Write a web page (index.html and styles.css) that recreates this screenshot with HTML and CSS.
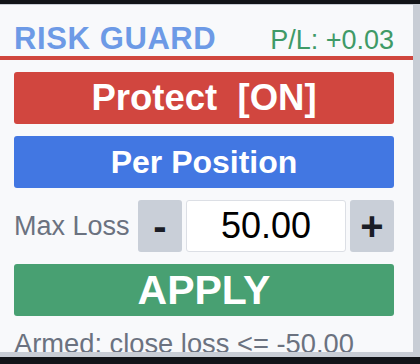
FILE: index.html
```html
<!DOCTYPE html>
<html>
<head>
<meta charset="utf-8">
	<title>Risk Guard</title>
	<link rel="stylesheet" href="styles.css">
</head>
<body>
	<div class="frame">
		<div class="panel">
			<div class="head">
				<span class="title">RISK GUARD</span>
				<span class="pl">P/L: +0.03</span>
			</div>
			<div class="body">
				<div class="btn red">Protect&nbsp; [ON]</div>
				<div class="btn blue">Per Position</div>
				<div class="row">
					<span class="lbl">Max Loss</span>
					<div class="step">-</div>
					<input type="text" class="val" value="50.00" />
					<div class="step">+</div>
				</div>
				<div class="btn green">APPLY</div>
				<div class="status">Armed: close loss &lt;= -50.00</div>
			</div>
		</div>
	</div>
</body>
</html>
```

FILE: styles.css
```css
body{margin: 0;background-color: #121418;font-family: "Liberation Sans", Arial, sans-serif;}

.frame{margin-top: 4px;height: 352px;padding-top: 1px;background-color: #c8cdd5;}
.panel{width: 413px;height: 347px;background-color: #f8f9fb;overflow: hidden;}

.head{display: flex;justify-content: space-between;align-items: baseline;height: 34px;padding: 17px 19px 0 14px;border-bottom: 4px solid #d0463e;}
.title{font-size: 31px;line-height: 34px;font-weight: bold;color: #6d9ae6;letter-spacing: 0.6px;}
.pl{font-size: 27px;color: #3f9a67;}

.body{display: flex;flex-direction: column;gap: 12px;padding: 12px 19px 0 14px;}
.btn{height: 52px;display: flex;align-items: center;justify-content: center;border-radius: 3px;color: #fff;font-weight: bold;white-space: nowrap;}
.red{background-color: #d1463f;font-size: 36.5px;}
.blue{background-color: #4277e2;font-size: 32px;}
.green{background-color: #48a072;font-size: 41px;}

.row{display: flex;align-items: center;height: 52px;}
.lbl{flex: 1;font-size: 27px;color: #6b7280;white-space: nowrap;}
.step{flex-shrink: 0;width: 44px;height: 52px;display: flex;align-items: center;justify-content: center;background-color: #c9cfd8;border-radius: 3px;color: #1a1d26;font-size: 40px;font-weight: bold;}
.val{flex-shrink: 0;box-sizing: border-box;width: 160px;height: 52px;margin: 0 4px;border: 1px solid #dcdfe5;border-radius: 3px;background-color: #fff;text-align: center;font-family: inherit;font-size: 36px;color: #000;padding: 0;outline: none;}

.status{font-size: 27.3px;color: #6b7280;white-space: nowrap;}
```
